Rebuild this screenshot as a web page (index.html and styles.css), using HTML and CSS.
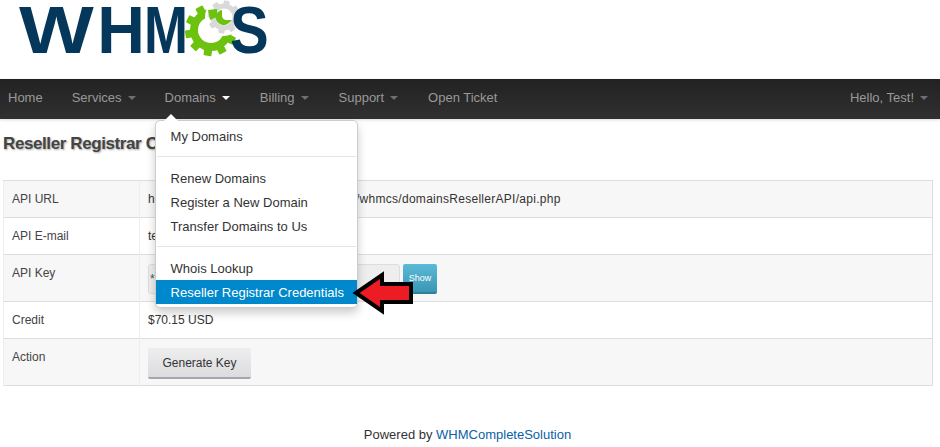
FILE: index.html
```html
<!DOCTYPE html>
<html lang="en">
<head>
<meta charset="utf-8">
<title>Reseller Registrar Credentials</title>
<link rel="stylesheet" href="styles.css">
</head>
<body>
<header class="brand">
  <span class="logo-letter logo-w">W</span>
  <span class="logo-letter logo-h">H</span>
  <span class="logo-letter logo-m">M</span>
  <svg class="gears" viewBox="0 0 64 60" width="64" height="60" aria-hidden="true">
    <g transform="translate(30 30)">
      <g class="gear-green">
        <rect x="-4" y="-26" width="8" height="52" rx="1" transform="rotate(8)"/>
        <rect x="-4" y="-26" width="8" height="52" rx="1" transform="rotate(44)"/>
        <rect x="-4" y="-26" width="8" height="52" rx="1" transform="rotate(80)"/>
        <rect x="-4" y="-26" width="8" height="52" rx="1" transform="rotate(116)"/>
        <rect x="-4" y="-26" width="8" height="52" rx="1" transform="rotate(152)"/>
        <circle r="21"/>
      </g>
      <circle class="gear-hole" r="13"/>
    </g>
    <circle class="gear-hole" cx="43" cy="17" r="19"/>
    <g transform="translate(43 17)">
      <g class="gear-grey">
        <rect x="-3" y="-16.5" width="6" height="33" rx="1" transform="rotate(10)"/>
        <rect x="-3" y="-16.5" width="6" height="33" rx="1" transform="rotate(55)"/>
        <rect x="-3" y="-16.5" width="6" height="33" rx="1" transform="rotate(100)"/>
        <rect x="-3" y="-16.5" width="6" height="33" rx="1" transform="rotate(145)"/>
        <circle r="13.5"/>
      </g>
      <circle class="gear-hole" r="8.5"/>
      <path class="gear-green" d="M-8 -2 A8 8 0 0 0 5 6 L8 3 L2 3 A4.5 4.5 0 0 1 -2 -1 L-2 -7 A8 8 0 0 0 -8 -2 Z"/>
    </g>
    <path class="gear-green" d="M27 10 L36 9 L36 17 L29 20 Z"/>
  </svg>
  <span class="logo-letter logo-s">S</span>
</header>

<nav class="navbar">
  <ul class="nav-list">
    <li class="nav-item nav-tight">Home</li>
    <li class="nav-item nav-tight">Services<span class="caret"></span></li>
    <li class="nav-item nav-open">Domains<span class="caret"></span>
      <div class="dropdown">
        <span class="dropdown-tip"></span>
        <a class="menu-item">My Domains</a>
        <div class="divider"></div>
        <a class="menu-item">Renew Domains</a>
        <a class="menu-item">Register a New Domain</a>
        <a class="menu-item">Transfer Domains to Us</a>
        <div class="divider"></div>
        <a class="menu-item">Whois Lookup</a>
        <a class="menu-item menu-active">Reseller Registrar Credentials</a>
      </div>
    </li>
    <li class="nav-item">Billing<span class="caret"></span></li>
    <li class="nav-item">Support<span class="caret"></span></li>
    <li class="nav-item">Open Ticket</li>
  </ul>
  <div class="nav-item nav-user">Hello, Test!<span class="caret"></span></div>
</nav>

<main class="content">
  <h1 class="page-title">Reseller Registrar Credentials</h1>
  <table class="info-table">
    <tr class="row-text">
      <td class="label">API URL</td>
      <td class="url-text">https://my-modulesgarden-demo.com/whmcs/domainsResellerAPI/api.php</td>
    </tr>
    <tr class="row-text">
      <td class="label">API E-mail</td>
      <td>test@example.com</td>
    </tr>
    <tr class="row-key">
      <td class="label">API Key</td>
      <td class="cell-control">
        <div class="key-group">
          <input class="key-input" type="text" value="********************" readonly>
          <button class="btn-show" type="button">Show</button>
        </div>
      </td>
    </tr>
    <tr class="row-text">
      <td class="label">Credit</td>
      <td>$70.15 USD</td>
    </tr>
    <tr class="row-action">
      <td class="label">Action</td>
      <td class="cell-control cell-action"><button class="btn-generate" type="button">Generate Key</button></td>
    </tr>
  </table>
</main>

<footer class="footer">Powered by <a class="footer-link">WHMCompleteSolution</a></footer>

<svg class="callout-arrow" viewBox="0 0 64 48" width="64" height="48" aria-hidden="true">
  <path d="M4 23 L30 5 L30 14 L59 14 L59 32 L30 32 L30 41 Z"/>
</svg>
</body>
</html>
```

FILE: styles.css
```css
* { box-sizing: border-box; }
html, body { margin: 0; padding: 0; }
body {
  position: relative;
  height: 447px;
  overflow: hidden;
  background: #fff;
  color: #333;
  font-family: "Liberation Sans", Arial, sans-serif;
  font-size: 12px;
  line-height: 20px;
}

.brand {
  display: flex;
  align-items: flex-start;
  height: 79px;
  padding-left: 19px;
}
.logo-letter {
  display: block;
  flex: none;
  color: #04375a;
  font-size: 66px;
  font-weight: 700;
  line-height: 60px;
  transform-origin: left center;
}
.logo-w { margin-right: 16px; transform: scaleX(1.2); }
.logo-m { margin-left: -1px; margin-right: -11px; transform: scaleX(.8); }
.logo-s { position: relative; margin-left: -15px; transform: scaleX(.88); }
.gears { flex: none; margin-left: -7px; }
.gear-grey { fill: #d9d9d9; }
.gear-green { fill: #6cc20e; }
.gear-hole { fill: #fff; }

.navbar {
  display: flex;
  justify-content: space-between;
  height: 40px;
  background: linear-gradient(#222, #303030);
  box-shadow: 0 1px 3px rgba(0, 0, 0, .15);
}
.nav-list { display: flex; margin: 0; padding: 0; list-style: none; }
.nav-item {
  position: relative;
  display: flex;
  align-items: center;
  padding: 0 15px 2px;
  color: #999;
  font-size: 13px;
}
.nav-list .nav-item:first-child { padding-left: 8px; }
.nav-list .nav-tight { padding-right: 14px; }
.nav-user { padding-right: 12px; }
.caret {
  width: 0;
  height: 0;
  margin-left: 6px;
  border-top: 4px solid #6f6f6f;
  border-left: 4px solid transparent;
  border-right: 4px solid transparent;
}
.nav-open .caret { border-top-color: #fff; }

.dropdown {
  position: absolute;
  z-index: 5;
  top: 41px;
  left: 5px;
  width: 203px;
  height: 188px;
  padding: 3px 0;
  background: #fff;
  border: 1px solid #ccc;
  border-radius: 5px;
  box-shadow: 0 5px 10px rgba(0, 0, 0, .2);
  color: #333;
  font-size: 13px;
}
.dropdown-tip {
  position: absolute;
  top: -7px;
  left: 8px;
  width: 0;
  height: 0;
  border-left: 7px solid transparent;
  border-right: 7px solid transparent;
  border-bottom: 7px solid #fff;
}
.menu-item {
  display: block;
  height: 24px;
  padding: 1px 0 0 15px;
  line-height: 24px;
  white-space: nowrap;
}
.menu-active { background: #0088cc; color: #fff; }
.divider { height: 1px; margin: 8px 1px 9px; background: #e5e5e5; }

.content { padding: 0 7px 0 3px; }
.page-title {
  height: 61px;
  margin: 0;
  padding-top: 14px;
  color: #444;
  font-size: 17px;
  font-weight: 700;
  line-height: 22px;
  letter-spacing: -.4px;
  text-shadow: 1px 1px 2px rgba(0, 0, 0, .35);
}
.info-table {
  width: 100%;
  border-collapse: collapse;
  border: 1px solid #ddd;
}
.info-table td {
  padding: 8px;
  border-top: 1px solid #ddd;
  border-left: 1px solid #eee;
  vertical-align: top;
  font-size: 12px;
}
.info-table tr:nth-child(odd) td { background: #f7f7f7; }
.info-table .label { width: 136px; color: #444; }
.info-table .url-text { letter-spacing: .28px; }
.info-table .cell-control { padding: 9px 8px 7px; }
.info-table .cell-action { padding-bottom: 6px; }
.row-text td { height: 36px; }
.row-key td { height: 46px; }
.row-action td { height: 46px; }
.key-group { display: flex; gap: 3px; }
.key-input {
  width: 252px;
  height: 30px;
  padding: 4px 0 4px 1px;
  background: #eee;
  border: 1px solid #ddd;
  border-radius: 3px;
  color: #555;
  font: 12px "Liberation Sans", Arial, sans-serif;
}
.btn-show {
  width: 34px;
  height: 30px;
  padding: 0;
  background: linear-gradient(#5bbad8, #3a96b4);
  border: 0;
  border-bottom: 2px solid #2f7f99;
  border-radius: 2px;
  color: #fff;
  font: 9px "Liberation Sans", Arial, sans-serif;
}
.btn-generate {
  display: block;
  width: 103px;
  height: 31px;
  padding: 0;
  background: linear-gradient(#eee, #dcdce0);
  border: 0;
  border-bottom: 2px solid #a6a6ac;
  border-radius: 2px;
  color: #333;
  font: 12px "Liberation Sans", Arial, sans-serif;
}

.footer {
  position: absolute;
  left: 0;
  right: 5px;
  bottom: 2px;
  text-align: center;
  font-size: 13px;
}
.footer-link { color: #0a5fa8; }

.callout-arrow {
  position: absolute;
  z-index: 6;
  top: 270px;
  left: 352px;
}
.callout-arrow path {
  fill: #ed1c24;
  stroke: #000;
  stroke-width: 4;
  stroke-linejoin: miter;
}
```
